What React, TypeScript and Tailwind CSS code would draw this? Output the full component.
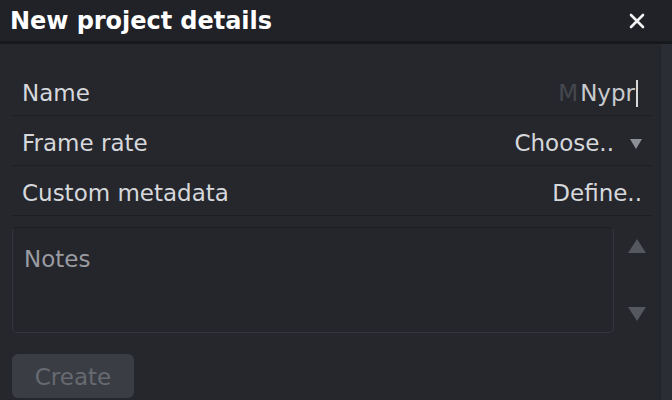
export default function App() {
  return (
    <div className="w-[672px] h-[400px] overflow-hidden bg-[#25272d] flex flex-col font-['DejaVu_Sans',sans-serif] text-[#d6d8dc]">
      <header className="h-[44px] shrink-0 bg-[#202228] border-b-[3px] border-[#16181c] flex items-center justify-between pl-[10px] pr-[27px]">
        <div className="text-[24px] font-bold text-white tracking-[-0.05px] pt-[1px]">New project details</div>
        <svg width="16" height="16" viewBox="0 0 16 16">
          <path d="M2 2 L14 14 M14 2 L2 14" stroke="#f2f2f2" strokeWidth="2.6" strokeLinecap="round" />
        </svg>
      </header>

      <div className="flex-1 flex">
        <div className="flex-1 flex flex-col pl-[12px] pr-[8px] pt-[22px]">
          <div className="h-[50px] flex items-center justify-between pl-[10px] pr-[14px] pt-[6px] border-b border-[#1d1f24]">
            <span className="text-[23px]">Name</span>
            <span className="flex items-center text-[23px] text-[#c8cacd]">
              <span className="text-[#45484e] mr-[2px]">M</span>
              <span>Nypr</span>
              <span className="w-[2px] h-[27px] bg-[#d8d8d8] ml-[1px]" />
            </span>
          </div>
          <div className="h-[50px] flex items-center justify-between pl-[10px] pr-[10px] pt-[6px] border-b border-[#1d1f24]">
            <span className="text-[23px]">Frame rate</span>
            <span className="flex items-center gap-[16px] text-[23px]">
              Choose..
              <svg width="12" height="10" viewBox="0 0 12 10">
                <path d="M0 0 H12 L6 10 Z" fill="#8c8f95" />
              </svg>
            </span>
          </div>
          <div className="h-[50px] flex items-center justify-between pl-[10px] pr-[10px] pt-[6px] border-b border-[#1d1f24]">
            <span className="text-[23px]">Custom metadata</span>
            <span className="text-[23px]">Define..</span>
          </div>

          <div className="flex items-stretch mt-[11px] gap-[14px]">
            <div className="w-[602px] h-[106px] rounded-[5px] border border-[#33363c] border-t-[#1c1e22] bg-[#24262c] px-[11px] pt-[14px]">
              <span className="text-[23px] text-[#9a9ca1]">Notes</span>
            </div>
            <div className="flex flex-col justify-between py-[12px]">
              <svg width="18" height="14" viewBox="0 0 18 14">
                <path d="M9 0 L18 14 H0 Z" fill="#55585e" />
              </svg>
              <svg width="18" height="14" viewBox="0 0 18 14">
                <path d="M0 0 H18 L9 14 Z" fill="#55585e" />
              </svg>
            </div>
          </div>

          <div className="mt-[21px]">
            <button className="w-[122px] h-[44px] rounded-[6px] bg-[#3a3d44] text-[23px] text-[#676a70] pt-[3px]">Create</button>
          </div>
        </div>
        <div className="w-[12px] bg-[#2a2d33] border-l border-[#22242a]" />
      </div>
    </div>
  );
}
